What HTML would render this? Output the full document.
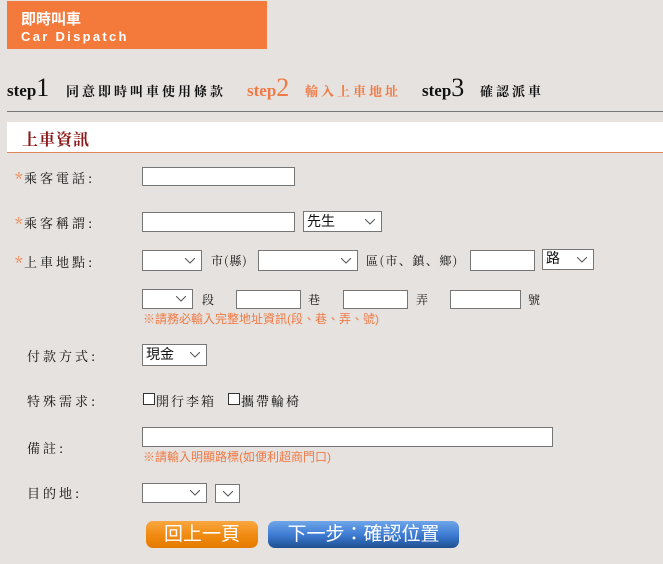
<!DOCTYPE html>
<html><head><meta charset="utf-8">
<style>
*{margin:0;padding:0;box-sizing:border-box}
html,body{width:663px;height:564px;overflow:hidden;background:#e6e2df;font-family:"Liberation Sans","Noto Sans CJK TC",sans-serif;color:#111}
.a{position:absolute;white-space:nowrap}
.hd{left:7px;top:1px;width:260px;height:48px;background:#f47a3c;color:#fff;font-weight:bold}
.st{font-family:"Liberation Serif","Noto Serif CJK SC",serif;font-weight:bold;font-size:17px}
.st b{font-size:26px;font-weight:normal}
.sc{font-family:"Noto Serif CJK SC",serif;font-weight:bold;font-size:13px;letter-spacing:3px}
.lbl{font-family:"Noto Serif CJK SC",serif;font-size:13px;letter-spacing:3px}
.star{color:#f07a40;font-size:16px;position:absolute;left:-9px;top:-1px}
.in{position:absolute;background:#fff;border:1px solid #767676}
.sel{position:absolute;background:#fff;border:1px solid #767676;font-size:14px;padding-left:3px;line-height:18px}
.sel svg{position:absolute;right:6px;top:50%;margin-top:-3px}
.note{color:#ef7a45;font-size:12px}
.cb{position:absolute;width:12px;height:12px;border:1px solid #333;background:#fff}
.btn{position:absolute;color:#fff;font-size:19px;text-align:center;line-height:27px;border-radius:7px}
</style></head><body>
<div class="a hd">
 <div class="a" style="left:14px;top:7px;font-size:15px;font-family:'Noto Sans CJK TC',sans-serif">即時叫車</div>
 <div class="a" style="left:14px;top:28px;font-size:13px;letter-spacing:2.3px">Car Dispatch</div>
</div>
<div class="a st" style="left:7px;top:73px">step<b>1</b></div>
<div class="a sc" style="left:66px;top:81px">同意即時叫車使用條款</div>
<div class="a st" style="left:247px;top:73px;color:#ef7a45">step<b>2</b></div>
<div class="a sc" style="left:305px;top:81px;color:#ef7a45">輸入上車地址</div>
<div class="a st" style="left:422px;top:73px">step<b>3</b></div>
<div class="a sc" style="left:480px;top:81px">確認派車</div>
<div class="a" style="left:7px;top:111px;width:656px;height:1px;background:#777"></div>
<div class="a" style="left:7px;top:122px;width:656px;height:31px;background:#fff;border-bottom:1px solid #e0865a"></div>
<div class="a" style="left:22px;top:127px;font-size:16px;font-weight:bold;color:#8b1a1a;font-family:'Noto Serif CJK SC',serif;letter-spacing:1px">上車資訊</div>

<div class="a lbl" style="left:24px;top:168px"><span class="star">*</span>乘客電話:</div>
<div class="in" style="left:142px;top:167px;width:153px;height:19px"></div>

<div class="a lbl" style="left:24px;top:213px"><span class="star">*</span>乘客稱謂:</div>
<div class="in" style="left:142px;top:212px;width:153px;height:20px"></div>
<div class="sel" style="left:303px;top:211px;width:79px;height:21px">先生<svg width="10" height="6"><path d="M0 0L5 5L10 0" fill="none" stroke="#555"/></svg></div>

<div class="a lbl" style="left:24px;top:252px"><span class="star">*</span>上車地點:</div>
<div class="sel" style="left:142px;top:250px;width:60px;height:21px"><svg width="10" height="6"><path d="M0 0L5 5L10 0" fill="none" stroke="#555"/></svg></div>
<div class="a lbl" style="left:211px;top:252px;font-size:12px;letter-spacing:1px">市(縣)</div>
<div class="sel" style="left:258px;top:250px;width:100px;height:21px"><svg width="10" height="6"><path d="M0 0L5 5L10 0" fill="none" stroke="#555"/></svg></div>
<div class="a lbl" style="left:366px;top:252px;font-size:12px;letter-spacing:1.5px">區(市、鎮、鄉)</div>
<div class="in" style="left:470px;top:250px;width:65px;height:21px"></div>
<div class="sel" style="left:542px;top:249px;width:52px;height:21px;line-height:16px">路<svg width="10" height="6"><path d="M0 0L5 5L10 0" fill="none" stroke="#555"/></svg></div>

<div class="sel" style="left:142px;top:289px;width:51px;height:20px"><svg width="10" height="6"><path d="M0 0L5 5L10 0" fill="none" stroke="#555"/></svg></div>
<div class="a lbl" style="left:202px;top:291px;font-size:12px">段</div>
<div class="in" style="left:236px;top:290px;width:65px;height:19px"></div>
<div class="a lbl" style="left:308px;top:291px;font-size:12px">巷</div>
<div class="in" style="left:343px;top:290px;width:65px;height:19px"></div>
<div class="a lbl" style="left:416px;top:291px;font-size:12px">弄</div>
<div class="in" style="left:450px;top:290px;width:71px;height:19px"></div>
<div class="a lbl" style="left:528px;top:291px;font-size:12px">號</div>
<div class="a note" style="left:143px;top:310px">※請務必輸入完整地址資訊(段、巷、弄、號)</div>

<div class="a lbl" style="left:27px;top:346px">付款方式:</div>
<div class="sel" style="left:142px;top:344px;width:65px;height:22px">現金<svg width="10" height="6"><path d="M0 0L5 5L10 0" fill="none" stroke="#555"/></svg></div>

<div class="a lbl" style="left:27px;top:391px">特殊需求:</div>
<div class="cb" style="left:143px;top:393px"></div>
<div class="a lbl" style="left:156px;top:391px;letter-spacing:2px">開行李箱</div>
<div class="cb" style="left:228px;top:393px"></div>
<div class="a lbl" style="left:241px;top:391px;letter-spacing:2px">攜帶輪椅</div>

<div class="a lbl" style="left:27px;top:438px">備註:</div>
<div class="in" style="left:142px;top:427px;width:411px;height:20px"></div>
<div class="a note" style="left:143px;top:448px">※請輸入明顯路標(如便利超商門口)</div>

<div class="a lbl" style="left:27px;top:483px">目的地:</div>
<div class="sel" style="left:142px;top:483px;width:65px;height:20px"><svg width="10" height="6"><path d="M0 0L5 5L10 0" fill="none" stroke="#555"/></svg></div>
<div class="sel" style="left:215px;top:484px;width:25px;height:19px"><svg width="10" height="6"><path d="M0 0L5 5L10 0" fill="none" stroke="#555"/></svg></div>

<div class="btn" style="left:146px;top:521px;width:112px;height:27px;background:linear-gradient(#f9a640,#f08a10 55%,#e57a00)">回上一頁</div>
<div class="btn" style="left:268px;top:521px;width:191px;height:27px;background:linear-gradient(#6ea6ea,#3b78d0 55%,#1e4f90)">下一步：確認位置</div>
</body></html>
